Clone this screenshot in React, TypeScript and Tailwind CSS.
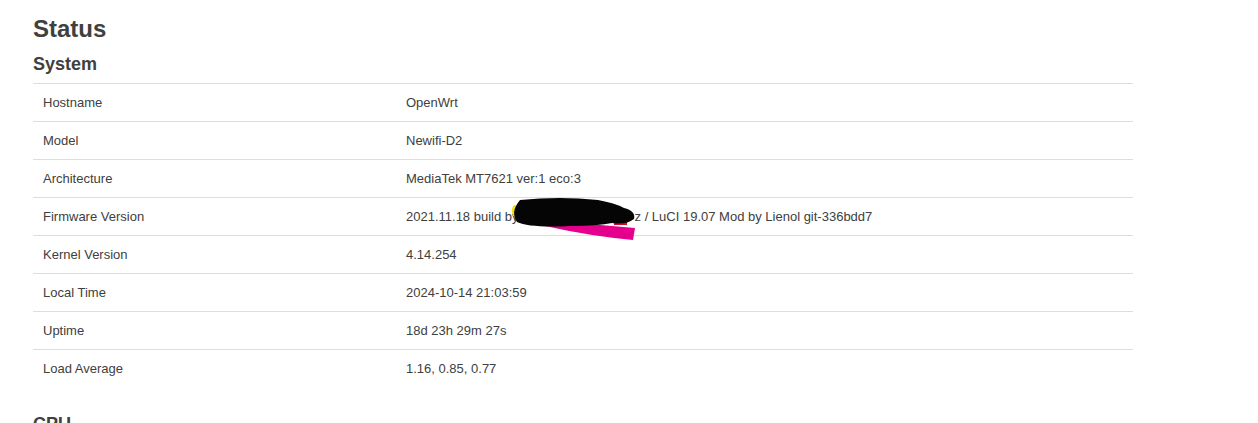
import React from "react";

const rows: { label: string; value: React.ReactNode }[] = [
  { label: "Hostname", value: "OpenWrt" },
  { label: "Model", value: "Newifi-D2" },
  { label: "Architecture", value: "MediaTek MT7621 ver:1 eco:3" },
  {
    label: "Firmware Version",
    value: (
      <>
        2021.11.18 build by
        <span className="inline-block w-[116px]" />z / LuCI 19.07 Mod by Lienol git-336bdd7
      </>
    ),
  },
  { label: "Kernel Version", value: "4.14.254" },
  { label: "Local Time", value: "2024-10-14 21:03:59" },
  { label: "Uptime", value: "18d 23h 29m 27s" },
  { label: "Load Average", value: "1.16, 0.85, 0.77" },
];

function Redaction() {
  return (
    <svg
      className="absolute left-[467px] top-[107px] w-[150px] h-[55px] pointer-events-none"
      viewBox="500 190 150 55"
    >
      <ellipse cx="515" cy="211" rx="3" ry="6" fill="#f2de00" />
      <path
        d="M538 220 Q590 224 635 228 L633 240 Q590 236 545 226 Z"
        fill="#e4008c"
      />
      <rect x="614" y="218" width="13" height="7" fill="#c8102e" />
      <path
        d="M520 200 Q560 196 598 200 Q615 203 624 208 Q636 211 634 219 Q626 225 612 223 Q598 226 570 226 Q530 228 517 222 Q510 212 520 200 Z"
        fill="#050505"
      />
    </svg>
  );
}

export default function App() {
  return (
    <div
      className="min-h-screen bg-white pl-[33px] pt-[15px] text-[#404040]"
      style={{ fontFamily: '"Liberation Sans", Arial, sans-serif' }}
    >
      <h2 className="text-[24px] leading-[28px] font-bold">Status</h2>
      <h3 className="mt-[9px] mb-[7px] text-[18px] leading-[24px] font-bold">System</h3>

      <div className="relative w-[1100px]">
        {rows.map((r) => (
          <div
            key={r.label}
            className="grid h-[38px] grid-cols-[363px_1fr] items-center border-t border-[#dddddd] text-[13px]"
          >
            <div className="pl-[10px]">{r.label}</div>
            <div className="pl-[10px] whitespace-nowrap">{r.value}</div>
          </div>
        ))}
        <Redaction />
      </div>

      <h3 className="mt-[25px] text-[18px] leading-[24px] font-bold">CPU</h3>
    </div>
  );
}
